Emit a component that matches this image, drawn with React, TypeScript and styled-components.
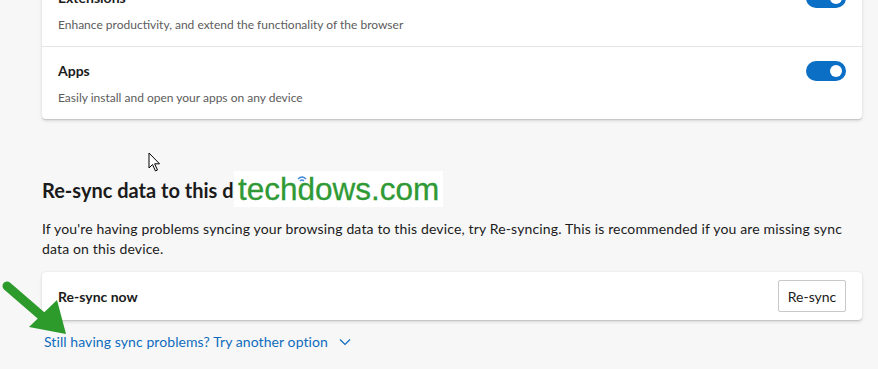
import styled, { createGlobalStyle } from "styled-components";

const GlobalStyle = createGlobalStyle`
  * { box-sizing: border-box; }
  body {
    margin: 0;
    background: #f7f7f7;
    font-family: Lato, "Open Sans", sans-serif;
    color: #1b1b1b;
    overflow: hidden;
  }
`;

const Page = styled.div`
  position: relative;
  width: 878px;
  height: 369px;
  overflow: hidden;
`;

const Content = styled.div`
  width: 820px;
  margin-left: 42px;
  margin-top: -26px;
`;

const Card = styled.div`
  background: #ffffff;
  border-radius: 4px;
  box-shadow: 0 1.6px 3.6px rgba(0, 0, 0, 0.13), 0 0.3px 0.9px rgba(0, 0, 0, 0.11);
`;

const SettingRow = styled.div<{ $divider?: boolean }>`
  display: flex;
  align-items: center;
  justify-content: space-between;
  padding: 14px 16px 12px;
  border-bottom: ${(p) => (p.$divider ? "1px solid #e5e5e5" : "none")};
`;

const RowText = styled.div`
  display: flex;
  flex-direction: column;
  gap: 8px;
`;

const RowTitle = styled.div`
  font-size: 14px;
  line-height: 20px;
  font-weight: 700;
  color: #1b1b1b;
`;

const RowDesc = styled.div`
  font-size: 12px;
  line-height: 18px;
  color: #5c5c5c;
`;

const Toggle = styled.div<{ $on: boolean }>`
  width: 40px;
  height: 20px;
  border-radius: 10px;
  background: ${(p) => (p.$on ? "#0b6fc6" : "#ffffff")};
  display: flex;
  align-items: center;
  justify-content: ${(p) => (p.$on ? "flex-end" : "flex-start")};
  padding: 0 4px;
  margin-bottom: 26px;
  &::after {
    content: "";
    width: 12px;
    height: 12px;
    border-radius: 50%;
    background: #ffffff;
  }
`;

const Heading = styled.h2`
  margin: 57px 0 0;
  font-size: 20px;
  line-height: 28px;
  font-weight: 700;
  color: #1b1b1b;
`;

const Paragraph = styled.p`
  margin: 15px 0 0;
  font-size: 14px;
  line-height: 20px;
  letter-spacing: 0.15px;
  color: #1b1b1b;
`;

const ActionCard = styled(Card)`
  margin-top: 13px;
  height: 48px;
  display: flex;
  align-items: center;
  justify-content: space-between;
  padding: 0 16px;
`;

const ActionTitle = styled.div`
  font-size: 14px;
  font-weight: 700;
  color: #1b1b1b;
`;

const Button = styled.button`
  height: 32px;
  width: 68px;
  background: #ffffff;
  border: 1px solid #c8c8c8;
  border-radius: 2px;
  font-family: inherit;
  font-size: 14px;
  color: #1b1b1b;
  padding: 0;
`;

const MoreLink = styled.a`
  display: inline-flex;
  align-items: center;
  gap: 11px;
  margin: 12px 0 0 2px;
  font-size: 14px;
  line-height: 20px;
  letter-spacing: 0.08px;
  color: #0f6cbd;
  text-decoration: none;
  cursor: pointer;
`;

const Watermark = styled.div`
  position: absolute;
  left: 234px;
  top: 171px;
  padding: 0 4px;
  background: #ffffff;
  font-family: "Liberation Sans", Arial, sans-serif;
  font-size: 31.5px;
  line-height: 36px;
  color: #2f9a35;
  -webkit-text-stroke: 0.3px #2f9a35;
`;

const Wifi = styled.svg`
  position: absolute;
  left: 63px;
  top: 4px;
`;

const Arrow = styled.svg`
  position: absolute;
  left: 0;
  top: 278px;
`;

const Cursor = styled.svg`
  position: absolute;
  left: 148px;
  top: 152px;
`;

export default function App() {
  return (
    <Page>
      <GlobalStyle />
      <Content>
        <Card>
          <SettingRow $divider>
            <RowText>
              <RowTitle>Extensions</RowTitle>
              <RowDesc>Enhance productivity, and extend the functionality of the browser</RowDesc>
            </RowText>
            <Toggle $on />
          </SettingRow>
          <SettingRow>
            <RowText>
              <RowTitle>Apps</RowTitle>
              <RowDesc>Easily install and open your apps on any device</RowDesc>
            </RowText>
            <Toggle $on />
          </SettingRow>
        </Card>

        <Heading>Re-sync data to this device</Heading>
        <Paragraph>
          If you're having problems syncing your browsing data to this device, try Re-syncing. This
          is recommended if you are missing sync data on this device.
        </Paragraph>

        <ActionCard>
          <ActionTitle>Re-sync now</ActionTitle>
          <Button>Re-sync</Button>
        </ActionCard>

        <MoreLink>
          Still having sync problems? Try another option
          <svg width="12" height="8" viewBox="0 0 12 8">
            <path d="M1 1.5 L6 6.5 L11 1.5" fill="none" stroke="#0f6cbd" strokeWidth="1.2" />
          </svg>
        </MoreLink>
      </Content>

      <Watermark>
        techdows.com
        <Wifi width="10" height="7" viewBox="0 0 10 7">
          <path d="M1 4 Q5 0 9 4" fill="none" stroke="#3d86d6" strokeWidth="1.3" />
          <path d="M3 6 Q5 4 7 6" fill="none" stroke="#3d86d6" strokeWidth="1.3" />
        </Wifi>
      </Watermark>

      <Cursor width="14" height="21" viewBox="0 0 14 21">
        <path
          d="M1 1 L1 16 L4.5 12.5 L7.5 19 L9.5 18 L6.6 11.8 L11.5 11.8 Z"
          fill="#ffffff"
          stroke="#000000"
          strokeWidth="1"
          strokeLinejoin="round"
        />
      </Cursor>

      <Arrow width="72" height="62" viewBox="0 0 72 62">
        <line x1="7" y1="8" x2="44" y2="40" stroke="#2c9b2c" strokeWidth="9" strokeLinecap="round" />
        <polygon points="66,56 29,49 57,22" fill="#2c9b2c" />
      </Arrow>
    </Page>
  );
}
